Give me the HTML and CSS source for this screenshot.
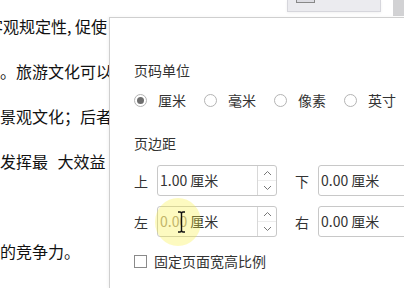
FILE: index.html
```html
<html>
<head>
	<title>页面设置</title>
	<meta http-equiv="Content-Type" content="text/html; charset=UTF-8">
	<link rel="stylesheet" href="styles.css">
</head>
<body>
	<div class="doc">
		<div class="doc-line cut">客观规定性, 促使</div>
		<div class="doc-line">。旅游文化可以</div>
		<div class="doc-line">景观文化；后者</div>
		<div class="doc-line spaced">发挥最 大效益</div>
		<div class="doc-line"></div>
		<div class="doc-line">的竞争力。</div>
	</div>

	<div class="toolbar">
		<div class="tool-button"><span class="tool-icon"></span></div>
		<div class="tool-strip"></div>
	</div>

	<div class="dialog">
		<div class="section-title">页码单位</div>
		<div class="radio-row">
			<div class="radio-item"><span class="radio checked"></span><span>厘米</span></div>
			<div class="radio-item"><span class="radio"></span><span>毫米</span></div>
			<div class="radio-item"><span class="radio"></span><span>像素</span></div>
			<div class="radio-item"><span class="radio"></span><span>英寸</span></div>
		</div>

		<div class="section-title margin-title">页边距</div>
		<div class="margin-row">
			<div class="field">
				<span class="field-label">上</span>
				<div class="spin-input">
					<div class="spin-value">1.00 厘米</div>
					<div class="spin-buttons">
						<div class="spin-up"><svg width="9" height="6" viewBox="0 0 9 6"><path d="M1 5 L4.5 1.5 L8 5" fill="none" stroke="#777" stroke-width="1"/></svg></div>
						<div class="spin-down"><svg width="9" height="6" viewBox="0 0 9 6"><path d="M1 1 L4.5 4.5 L8 1" fill="none" stroke="#777" stroke-width="1"/></svg></div>
					</div>
				</div>
			</div>
			<div class="field">
				<span class="field-label">下</span>
				<div class="spin-input wide">
					<div class="spin-value">0.00 厘米</div>
				</div>
			</div>
		</div>
		<div class="margin-row second">
			<div class="field">
				<span class="field-label">左</span>
				<div class="spin-input">
					<div class="spin-value"><span class="faded">0.00</span> 厘米</div>
					<div class="spin-buttons">
						<div class="spin-up"><svg width="9" height="6" viewBox="0 0 9 6"><path d="M1 5 L4.5 1.5 L8 5" fill="none" stroke="#777" stroke-width="1"/></svg></div>
						<div class="spin-down"><svg width="9" height="6" viewBox="0 0 9 6"><path d="M1 1 L4.5 4.5 L8 1" fill="none" stroke="#777" stroke-width="1"/></svg></div>
					</div>
				</div>
			</div>
			<div class="field">
				<span class="field-label">右</span>
				<div class="spin-input wide">
					<div class="spin-value">0.00 厘米</div>
				</div>
			</div>
		</div>

		<div class="check-row">
			<span class="checkbox"></span>
			<span>固定页面宽高比例</span>
		</div>
	</div>

	<div class="cursor-glow"></div>
	<svg class="ibeam" width="9" height="22" viewBox="0 0 9 22">
		<path d="M1 1 H3 Q4.5 1 4.5 3 V19 Q4.5 21 3 21 H1 M8 1 H6 Q4.5 1 4.5 3 M4.5 19 Q4.5 21 6 21 H8" fill="none" stroke="#111" stroke-width="1.4"/>
	</svg>
</body>
</html>
```

FILE: styles.css
```css
	body {
		margin: 0;
		padding: 0;
		width: 404px;
		height: 288px;
		overflow: hidden;
		position: relative;
		background-color: white;
		font-family: "Noto Sans CJK SC", "Noto Sans", sans-serif;
	}

	.doc {
		padding-top: 4px;
		width: 110px;
		overflow: hidden;
	}

	.doc-line {
		font-size: 16px;
		line-height: 45px;
		height: 45px;
		color: #111;
		white-space: nowrap;
	}

	.doc-line.cut {
		text-indent: -13px;
	}

	.doc-line.spaced {
		word-spacing: 6px;
	}

	/* toolbar peeking out above the dialog */
	.toolbar {
		position: absolute;
		top: 0;
		right: 0;
		width: 117px;
		height: 16px;
		display: flex;
	}

	.tool-button {
		width: 92px;
		height: 11px;
		background-color: #ebebef;
		border: 1px solid #d6d6dc;
		border-top: none;
		box-shadow: 0 1px 3px rgba(0,0,0,0.06);
	}

	.tool-icon {
		display: block;
		width: 17px;
		height: 2px;
		margin-left: 8px;
		border: 1px solid #888;
		border-top: none;
		background-color: #dcdce2;
	}

	.tool-strip {
		margin-left: auto;
		width: 11px;
		height: 16px;
		background-color: #d2d2d4;
	}

	.dialog {
		position: absolute;
		left: 109px;
		top: 17px;
		right: 0;
		bottom: 0;
		background-color: white;
		border-left: 1px solid #cfcfcf;
		border-top: 1px solid #cfcfcf;
		padding: 43px 0 0 24px;
		font-size: 14px;
		color: #333;
		box-shadow: -1px 0 3px rgba(0,0,0,0.05);
	}

	.section-title {
		line-height: 18px;
		height: 18px;
	}

	.radio-row {
		display: flex;
		gap: 18px;
		margin-top: 12px;
		height: 18px;
		line-height: 18px;
	}

	.radio-item {
		display: flex;
		align-items: center;
		gap: 11px;
		white-space: nowrap;
	}

	.radio {
		display: flex;
		align-items: center;
		justify-content: center;
		width: 11px;
		height: 11px;
		border: 1px solid #b4b4b4;
		border-radius: 50%;
	}

	.radio.checked::after {
		content: "";
		width: 7px;
		height: 7px;
		border-radius: 50%;
		background-color: #6e6e6e;
	}

	.margin-title {
		margin-top: 25px;
	}

	.margin-row {
		display: flex;
		gap: 18px;
		margin-top: 13px;
	}

	.margin-row.second {
		margin-top: 10px;
	}

	.field {
		display: flex;
		align-items: center;
		gap: 9px;
	}

	.field-label {
		width: 14px;
		white-space: nowrap;
	}

	.spin-input {
		display: flex;
		width: 118px;
		height: 29px;
		border: 1px solid #c8c8c8;
		border-radius: 3px;
		box-sizing: content-box;
	}

	.spin-input.wide {
		width: 120px;
	}

	.spin-value {
		flex: 1;
		padding-left: 2px;
		line-height: 29px;
		white-space: nowrap;
		color: #333;
	}

	.faded {
		color: #a89a80;
	}

	.spin-buttons {
		width: 18px;
		border-left: 1px solid #d8d8d8;
		display: flex;
		flex-direction: column;
	}

	.spin-up, .spin-down {
		flex: 1;
		display: flex;
		align-items: center;
		justify-content: center;
	}

	.spin-up {
		border-bottom: 1px solid #ececec;
	}

	.check-row {
		display: flex;
		align-items: center;
		gap: 7px;
		margin-top: 15px;
		height: 18px;
		line-height: 18px;
	}

	.checkbox {
		width: 11px;
		height: 11px;
		border: 1px solid #8a8a8a;
	}

	/* pointer highlight over the left field */
	.cursor-glow {
		position: absolute;
		left: 155px;
		top: 198px;
		width: 46px;
		height: 48px;
		border-radius: 50%;
		background-color: rgba(250, 240, 60, 0.32);
		pointer-events: none;
	}

	.ibeam {
		position: absolute;
		left: 177px;
		top: 211px;
	}
```
